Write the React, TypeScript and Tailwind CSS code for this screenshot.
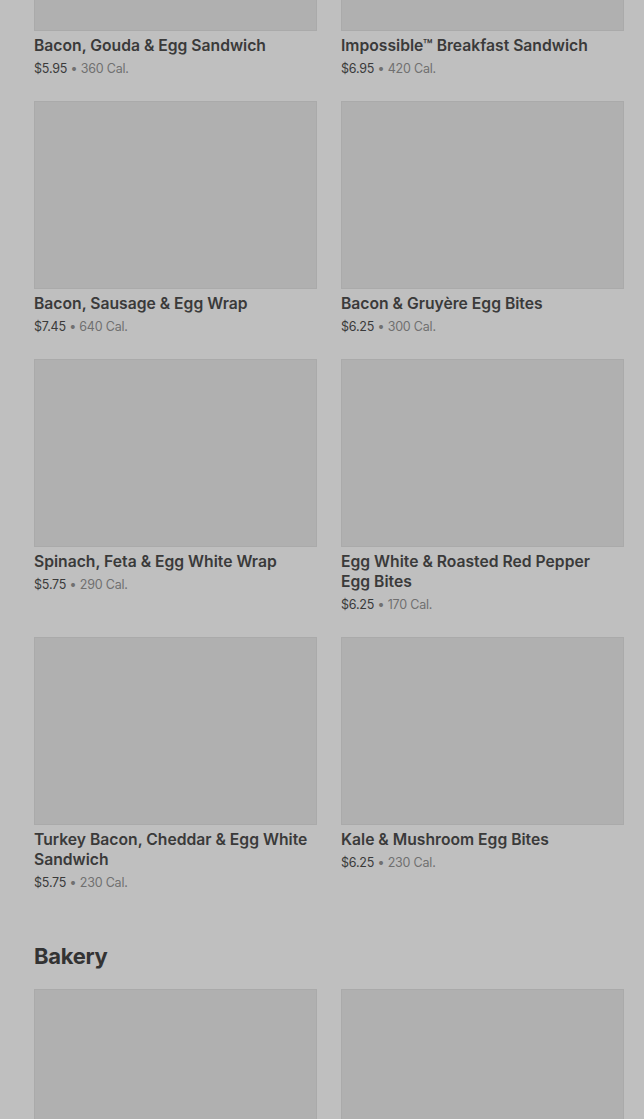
import React from "react";

type Item = { name: string; price: string; cal: string };

const breakfast: Item[] = [
  { name: "Bacon, Gouda & Egg Sandwich", price: "$5.95", cal: "360 Cal." },
  { name: "Impossible™ Breakfast Sandwich", price: "$6.95", cal: "420 Cal." },
  { name: "Bacon, Sausage & Egg Wrap", price: "$7.45", cal: "640 Cal." },
  { name: "Bacon & Gruyère Egg Bites", price: "$6.25", cal: "300 Cal." },
  { name: "Spinach, Feta & Egg White Wrap", price: "$5.75", cal: "290 Cal." },
  { name: "Egg White & Roasted Red Pepper Egg Bites", price: "$6.25", cal: "170 Cal." },
  { name: "Turkey Bacon, Cheddar & Egg White Sandwich", price: "$5.75", cal: "230 Cal." },
  { name: "Kale & Mushroom Egg Bites", price: "$6.25", cal: "230 Cal." },
];

const MenuCard: React.FC<{ item?: Item }> = ({ item }) => (
  <div className="pb-[22px]">
    <div className="h-[188px] bg-[#b0b0b0] border border-[#aaaaaa]" />
    {item && (
      <>
        <div className="mt-[5px] pr-1 text-[15.7px] leading-5 font-semibold text-[#3a3a3a]">{item.name}</div>
        <div className="mt-[3px] text-[12.5px] leading-5 tracking-[-0.2px] text-[#3a3a3a]">
          {item.price}
          <span className="text-[#707070]"> • {item.cal}</span>
        </div>
      </>
    )}
  </div>
);

export default function App() {
  return (
    <div
      className="w-[644px] h-[1119px] overflow-hidden bg-[#bfbfbf]"
      style={{ fontFamily: "Inter, 'Noto Sans', sans-serif" }}
    >
      <div className="-mt-[157px] pl-[34px] pr-[20px]">
        {/* Breakfast */}
        <div className="grid grid-cols-2 gap-x-6">
          {breakfast.map((item, i) => (
            <MenuCard key={i} item={item} />
          ))}
        </div>

        {/* Bakery */}
        <h2 className="mt-[25px] mb-[17px] text-[22px] leading-8 font-bold text-[#333333] tracking-[-0.3px]">Bakery</h2>
        <div className="grid grid-cols-2 gap-x-6">
          <MenuCard />
          <MenuCard />
        </div>
      </div>
    </div>
  );
}
